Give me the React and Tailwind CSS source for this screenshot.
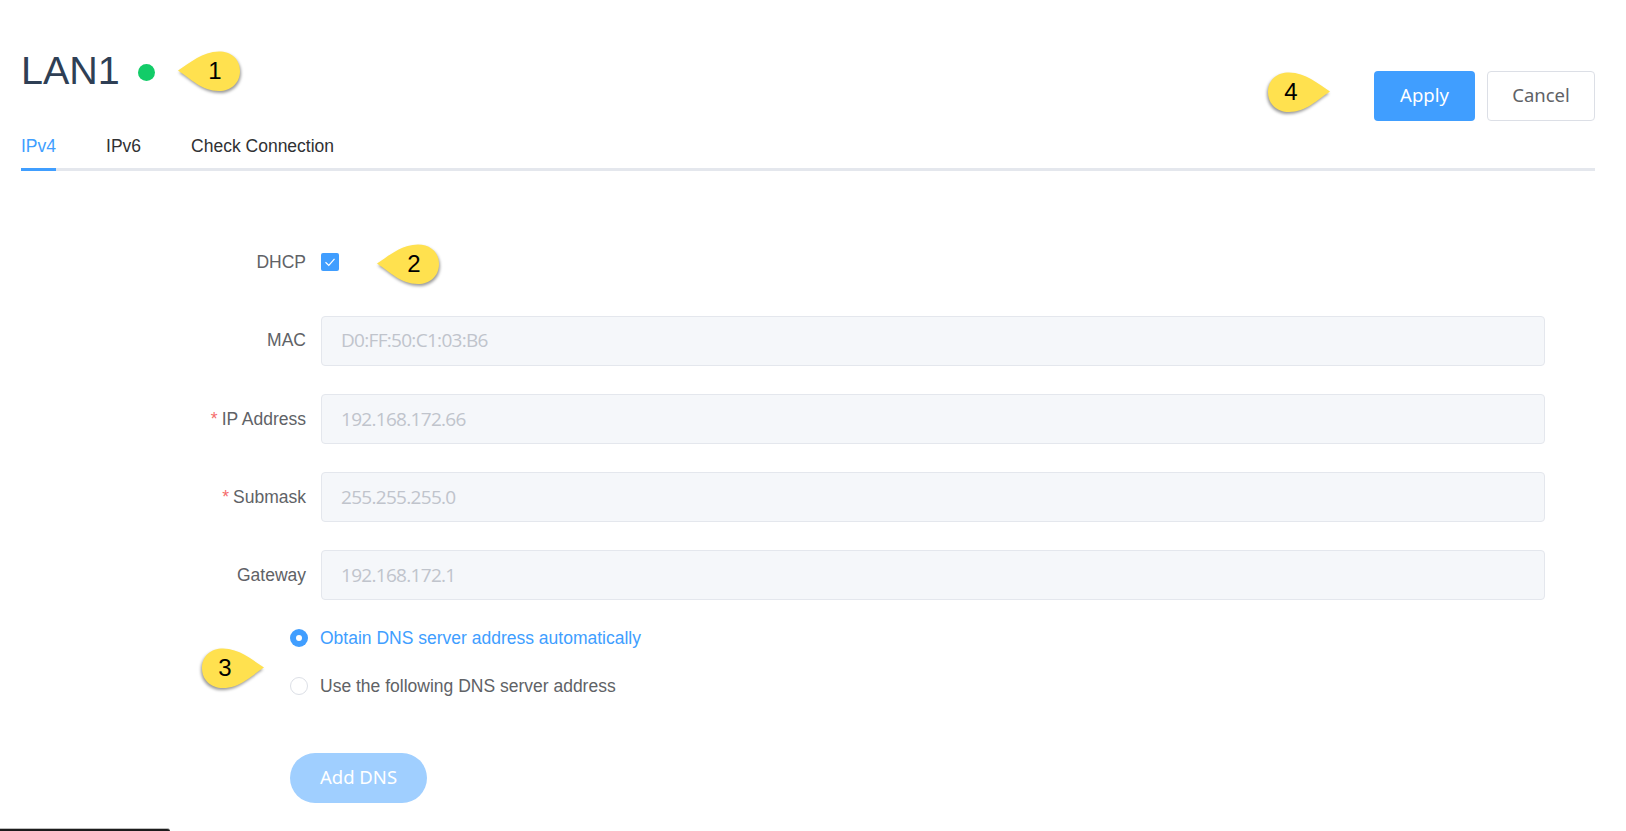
const fields = [
  { label: 'MAC', value: 'D0:FF:50:C1:03:B6' },
  { label: 'IP Address', value: '192.168.172.66', required: true },
  { label: 'Submask', value: '255.255.255.0', required: true },
  { label: 'Gateway', value: '192.168.172.1' },
];

const Callout = ({ n, className, flip }) => (
  <div className={`absolute h-[44px] w-[68px] ${className}`}>
    <svg
      viewBox="0 0 68 44"
      className={`h-full w-full drop-shadow-[1px_2px_1.5px_rgba(0,0,0,0.4)] ${flip ? '-scale-x-100' : ''}`}
    >
      <path
        d="M1 20.5 C14 12 25 2 42 1.5 C54 1.5 63 9 63 21 C63 33 54 41 42 41 C25 41 14 29 1 20.5 Z"
        fill="#ffe14f"
      />
    </svg>
    <span
      className={`absolute top-[7px] text-center text-[24px] leading-[28px] text-black ${
        flip ? 'left-[3px] w-[50px]' : 'left-[13px] w-[50px]'
      }`}
    >
      {n}
    </span>
  </div>
);

const App = () => {
  return (
    <div className="relative h-[831px] w-[1626px] overflow-hidden bg-white font-['Liberation_Sans',sans-serif]">
      <div className="pt-[46px] pr-[31px] pl-[21px]">
        <div className="flex items-start justify-between">
          <div className="flex items-center">
            <h1 className="text-[39.5px] leading-[48px] font-normal text-[#2f3f55]">LAN1</h1>
            <span className="mt-[4px] ml-[18px] h-[17px] w-[17px] rounded-full bg-[#12cc68]" />
          </div>
          <div className="mt-[25px] flex gap-[12px] font-['Noto_Sans',sans-serif] text-[18.5px] leading-[24px]">
            <button className="h-[50px] w-[101px] rounded-[4px] bg-[#409eff] pb-[2px] text-white">Apply</button>
            <button className="h-[50px] w-[108px] rounded-[4px] border border-[#dcdfe6] bg-white pb-[2px] text-[#606266]">
              Cancel
            </button>
          </div>
        </div>

        <div className="mt-[7px] flex h-[43px] gap-[50px] border-b-[3px] border-[#e4e7ed] text-[17.5px] text-[#303133]">
          <div className="-mb-[3px] flex h-[43px] items-center border-b-[3px] border-[#409eff] pb-[3px] text-[#409eff]">IPv4</div>
          <div className="flex h-[40px] items-center pb-[3px]">IPv6</div>
          <div className="flex h-[40px] items-center pb-[3px]">Check Connection</div>
        </div>
      </div>

      <div className="mt-[82px] pr-[81px]">
        <div className="flex h-[18px] items-center">
          <label className="w-[306px] text-right text-[17.5px] text-[#606266]">DHCP</label>
          <span className="ml-[15px] flex h-[18px] w-[18px] items-center justify-center rounded-[2px] bg-[#409eff]">
            <svg viewBox="0 0 18 18" className="h-[18px] w-[18px]" fill="none" stroke="#fff" strokeWidth="1.2">
              <path d="M4.5 9.2 L7.8 12.4 L13.5 5.8" />
            </svg>
          </span>
        </div>

        <div className="mt-[44.5px] flex flex-col gap-[28.33px]">
          {fields.map((f) => (
            <div key={f.label} className="flex h-[50px] items-center">
              <label className="w-[306px] text-right text-[17.5px] text-[#606266]">
                {f.required && <span className="mr-[4px] text-[#f56c6c]">*</span>}
                {f.label}
              </label>
              <div className="ml-[15px] flex h-[50px] flex-1 items-center rounded-[4px] border border-[#e4e7ed] bg-[#f5f7fa] px-[19px] font-['Open_Sans',sans-serif] text-[19px] tracking-[-0.7px] text-[#c0c4cc]">
                {f.value}
              </div>
            </div>
          ))}
        </div>

        <div className="mt-[28.5px] ml-[290px] flex flex-col gap-[29px] text-[17.5px]">
          <div className="flex h-[19px] items-center">
            <span className="flex h-[18px] w-[18px] items-center justify-center rounded-full bg-[#409eff]">
              <span className="h-[6px] w-[6px] rounded-full bg-white" />
            </span>
            <span className="ml-[12px] text-[#409eff]">Obtain DNS server address automatically</span>
          </div>
          <div className="flex h-[19px] items-center">
            <span className="h-[18px] w-[18px] rounded-full border border-[#dcdfe6] bg-white" />
            <span className="ml-[12px] text-[#606266]">Use the following DNS server address</span>
          </div>
        </div>

        <button className="mt-[57px] ml-[290px] h-[50px] w-[137px] rounded-full bg-[#a0cfff] pb-[2px] font-['Noto_Sans',sans-serif] text-[18.5px] leading-[24px] text-white">
          Add DNS
        </button>
      </div>

      <Callout n="1" className="top-[50px] left-[177px]" />
      <Callout n="2" className="top-[243px] left-[376px]" />
      <Callout n="3" className="top-[647px] left-[197px]" flip />
      <Callout n="4" className="top-[71px] left-[1263px]" flip />

      <div className="absolute bottom-0 left-0 h-[3px] w-[170px] rounded-tr-[3px] border-t border-[#bdbdbd] bg-[#1c1c1c]" />
    </div>
  );
};

export default App;
